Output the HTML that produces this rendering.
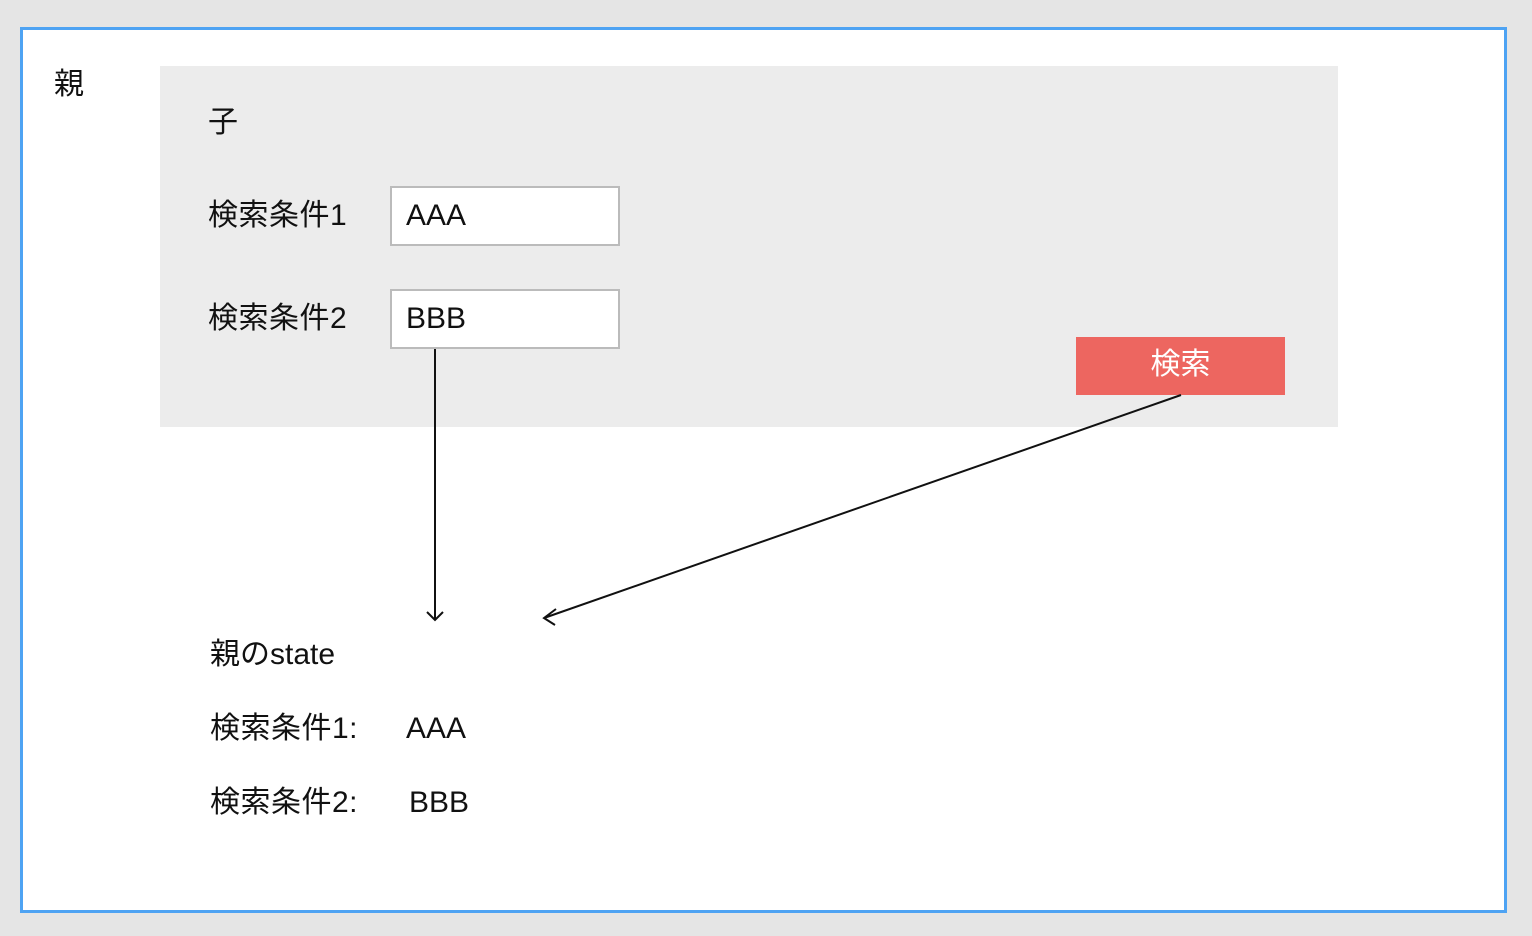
<!DOCTYPE html>
<html><head><meta charset="utf-8"><style>
*{margin:0;padding:0;box-sizing:border-box}
body{width:1532px;height:936px;background:#e5e5e5;position:relative;overflow:hidden;font-family:"Liberation Sans","Noto Sans CJK JP",sans-serif;color:#111}
.t{position:absolute;font-size:30px;line-height:36px;white-space:nowrap}
#outer{position:absolute;left:20px;top:27px;width:1487px;height:886px;border:3px solid #4ea3f3;background:#fff}
#child{position:absolute;left:160px;top:66px;width:1178px;height:361px;background:#ececec}
.inp{position:absolute;width:230px;height:60px;border:2px solid #bbb;background:#fff}
#btn{position:absolute;left:1076px;top:337px;width:209px;height:58px;background:#ed6660;color:#fff;font-size:30px;text-align:center;line-height:56px}
svg{position:absolute;left:0;top:0}
</style></head><body>
<div id="outer"></div>
<div id="child"></div>
<div class="t" style="left:54px;top:67px">親</div>
<div class="t" style="left:208px;top:105px">子</div>
<div class="t" style="left:208px;top:198px;letter-spacing:0.5px">検索条件1</div>
<div class="t" style="left:208px;top:301px;letter-spacing:0.5px">検索条件2</div>
<div class="inp" style="left:390px;top:186px"></div>
<div class="inp" style="left:390px;top:289px"></div>
<div class="t" style="left:406px;top:198px">AAA</div>
<div class="t" style="left:406px;top:301px">BBB</div>
<div id="btn">検索</div>
<div class="t" style="left:210px;top:637px">親のstate</div>
<div class="t" style="left:210px;top:711px;letter-spacing:0.5px">検索条件1:</div>
<div class="t" style="left:406px;top:711px">AAA</div>
<div class="t" style="left:210px;top:785px;letter-spacing:0.5px">検索条件2:</div>
<div class="t" style="left:409px;top:785px">BBB</div>
<svg width="1532" height="936" fill="none" stroke="#111" stroke-width="2">
<path d="M435 349V620M427 612L435 620L443 612"/>
<path d="M1181 395L544 618M556 609L544 618L555 625"/>
</svg>
</body></html>
